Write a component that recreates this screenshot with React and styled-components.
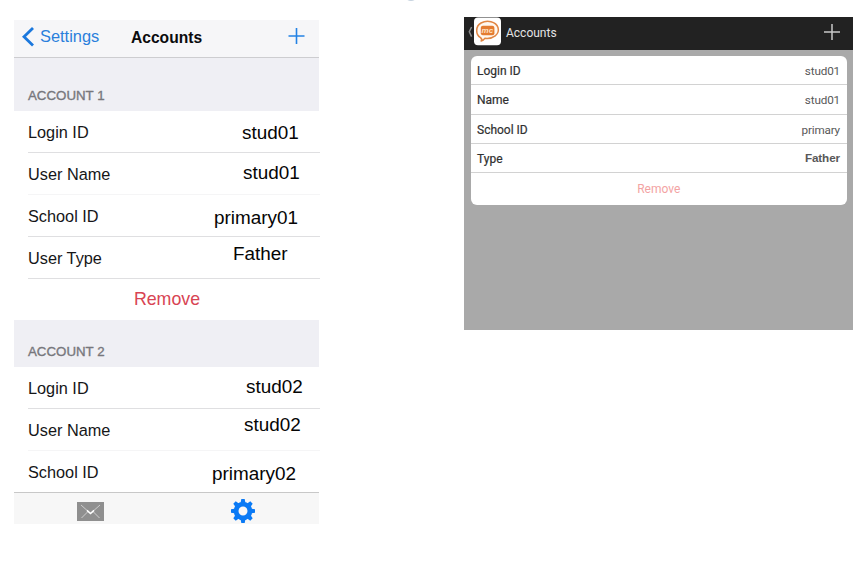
import React from "react";
import styled, { createGlobalStyle } from "styled-components";

const GlobalStyle = createGlobalStyle`
  * { box-sizing: border-box; }
  html, body { margin: 0; padding: 0; background: #fff; }
  body { overflow: hidden; }
`;

const Page = styled.main`
  position: relative;
  display: flex;
  align-items: flex-start;
  gap: 144px;
  width: 858px;
  height: 566px;
  padding: 17px 5px 0 14px;
  font-family: "Liberation Sans", Arial, sans-serif;
`;

const TopMark = styled.span`
  position: absolute;
  top: -5px;
  left: 406px;
  width: 10px;
  height: 6px;
  border-radius: 50%;
  background: #c6d3df;
`;

/* ---------- iOS screen ---------- */

const Phone = styled.section`
  display: flex;
  flex-direction: column;
  width: 306px;
  height: 504px;
  margin-top: 3px;
`;

const NavBar = styled.header`
  display: flex;
  flex: none;
  height: 38px;
  margin-right: 1px;
  padding: 0 14px 0 8px;
  line-height: 33px;
  background: #f6f6f8;
  border-bottom: 1px solid #cdcdd0;
`;

const Back = styled.div`
  display: flex;
  gap: 5px;
  width: 109px;
  color: #2a7fdc;
  font-size: 16.4px;
  svg { margin-top: 7px; }
`;

const NavTitle = styled.h1`
  flex: 1;
  margin: 0;
  color: #0b0b0d;
  font-size: 15.6px;
  line-height: 35px;
  font-weight: 700;
`;

const AddIcon = styled.svg`
  margin-top: 8px;
`;

const GroupHeader = styled.h2`
  flex: none;
  height: ${(p) => p.$height}px;
  margin: 0 1px 0 0;
  padding: ${(p) => p.$height - 23}px 0 0 14px;
  background: #efeff4;
  color: #77777c;
  font-size: 13.3px;
  line-height: 16px;
  font-weight: 400;
  -webkit-text-stroke: 0.35px #77777c;
`;

const Row = styled.div`
  display: flex;
  flex: none;
  align-items: flex-start;
  height: ${(p) => (p.$last ? 41 : 42)}px;
  margin-left: 14px;
  border-bottom: ${(p) => (p.$last ? 0 : 1)}px solid ${(p) => (p.$faint ? "#f5f5f6" : "#dfdfe1")};
`;

const Label = styled.span`
  flex: none;
  width: ${(p) => p.$width}px;
  color: #161618;
  font-size: 16.3px;
  line-height: 42px;
  white-space: nowrap;
`;

const Value = styled.span`
  margin-top: ${(p) => p.$shift}px;
  color: #050505;
  font-size: 18.9px;
  line-height: 44px;
  white-space: nowrap;
`;

const RemoveRow = styled.div`
  flex: none;
  height: 41px;
  color: #d84453;
  font-size: 17.8px;
  line-height: 40px;
  text-align: center;
`;

const TabBar = styled.nav`
  display: flex;
  flex: none;
  height: 32px;
  margin-right: 1px;
  padding: 0 0 0 63px;
  background: #f7f7f7;
  border-top: 1px solid #c8c8c8;
`;

const MailIcon = styled.svg`
  margin: 9px 126px 0 0;
`;

const GearIcon = styled.svg`
  margin-top: 5px;
`;

/* ---------- Android screen ---------- */

const Tablet = styled.section`
  width: 389px;
  height: 313px;
  background: #a9a9a9;
  font-family: Roboto, "Liberation Sans", sans-serif;
`;

const ActionBar = styled.header`
  display: flex;
  align-items: flex-start;
  height: 33px;
  padding: 0 13px 0 2px;
  background: #222;
`;

const ActionTitle = styled.h1`
  flex: 1;
  margin: 0 0 0 5px;
  color: #e4e4e4;
  font-size: 12px;
  line-height: 32px;
  font-weight: 400;
`;

const ActionAdd = styled.svg`
  margin-top: 7px;
`;

const Card = styled.div`
  height: 149px;
  margin: 6px 6px 0 6.5px;
  overflow: hidden;
  background: #fff;
  border-radius: 6px;
`;

const CardRow = styled.div`
  display: flex;
  justify-content: space-between;
  height: 29.25px;
  padding: 0 7px 0 6.5px;
  border-bottom: 1px solid #d2d2d2;
  line-height: 31px;
`;

const CardLabel = styled.span`
  color: #303030;
  font-size: 12px;
  font-weight: 400;
  -webkit-text-stroke: 0.2px #303030;
`;

const CardValue = styled.span`
  color: #585858;
  font-family: ${(p) => (p.$strong ? '"Liberation Sans", sans-serif' : "inherit")};
  font-size: 11.7px;
  font-weight: ${(p) => (p.$strong ? 700 : 400)};
  line-height: ${(p) => (p.$strong ? 28 : 31)}px;
  letter-spacing: ${(p) => (p.$strong ? -0.1 : -0.15)}px;
`;

const CardRemove = styled.div`
  color: #f3a3a3;
  font-size: 12px;
  line-height: 33px;
  text-align: center;
`;

const accountOne = [
  { label: "Login ID", value: "stud01", x: 214, shift: 0 },
  { label: "User Name", value: "stud01", x: 215, shift: -2, faint: true },
  { label: "School ID", value: "primary01", x: 186, shift: 1 },
  { label: "User Type", value: "Father", x: 205, shift: -5 },
];

const accountTwo = [
  { label: "Login ID", value: "stud02", x: 218, shift: -2 },
  { label: "User Name", value: "stud02", x: 216, shift: -6, faint: true },
  { label: "School ID", value: "primary02", x: 184, shift: 1, last: true },
];

const cardRows = [
  { label: "Login ID", value: "stud01" },
  { label: "Name", value: "stud01" },
  { label: "School ID", value: "primary" },
  { label: "Type", value: "Father", strong: true },
];

function Rows({ items }) {
  return items.map((r) => (
    <Row key={r.label} $faint={r.faint} $last={r.last}>
      <Label $width={r.x}>{r.label}</Label>
      <Value $shift={r.shift}>{r.value}</Value>
    </Row>
  ));
}

function Gear() {
  return (
    <GearIcon width="26" height="26" viewBox="-13 -13 26 26">
      <g fill="#0a7af5">
        {[0, 45, 90, 135, 180, 225, 270, 315].map((a) => (
          <path key={a} d="M-2.6-7 L-1.7-12 H1.7 L2.6-7Z" transform={`rotate(${a})`} />
        ))}
      </g>
      <circle r="6.9" fill="none" stroke="#0a7af5" strokeWidth="4.8" />
    </GearIcon>
  );
}

function AppLogo() {
  return (
    <svg width="35" height="29" viewBox="0 0 35 29">
      <path d="M5.6 10 L3.3 14.8 L5.6 19.6" fill="none" stroke="#8c8c8c" strokeWidth="1.5" />
      <rect x="8" y="0.4" width="27" height="27.8" rx="4" fill="#fff" />
      <path
        d="M14.5 20.6 C9.5 17.6 9.2 9.3 15 6 C21 2.8 30 4.3 32 10.5 C34 17.3 27 22.3 18.8 21.3 C17.8 22.8 16.8 23.6 15.2 24 C16 22.8 15.8 21.6 14.5 20.6Z"
        fill="#fff8f0"
        stroke="#e18643"
        strokeWidth="1.5"
        strokeLinejoin="round"
      />
      <rect x="14.8" y="8.8" width="13.6" height="9.4" rx="2" fill="#e47c31" />
      <text x="21.4" y="16" textAnchor="middle" fontFamily="'Liberation Sans', sans-serif" fontSize="8" fontWeight="700" fontStyle="italic" fill="#ffe1c2">
        mc
      </text>
    </svg>
  );
}

export default function App() {
  return (
    <>
      <GlobalStyle />
      <Page>
        <TopMark />
        <Phone>
          <NavBar>
            <Back>
              <svg width="13" height="20" viewBox="0 0 13 20">
                <path d="M11 1 L2 9.8 L11 18.6" fill="none" stroke="#1b78dd" strokeWidth="2.8" />
              </svg>
              <span>Settings</span>
            </Back>
            <NavTitle>Accounts</NavTitle>
            <AddIcon width="17" height="17" viewBox="0 0 17 17">
              <path d="M8.5 0 V16 M0.5 8 H16.5" stroke="#2482e4" strokeWidth="1.6" />
            </AddIcon>
          </NavBar>
          <GroupHeader $height={53}>ACCOUNT 1</GroupHeader>
          <Rows items={accountOne} />
          <RemoveRow>Remove</RemoveRow>
          <GroupHeader $height={47}>ACCOUNT 2</GroupHeader>
          <Rows items={accountTwo} />
          <TabBar>
            <MailIcon width="27" height="19" viewBox="0 0 27 19">
              <rect width="27" height="19" fill="#8f8f8f" />
              <path d="M4 3 L13.5 11.5 L23 3 M4.5 16 L11 9.5 M22.5 16 L16 9.5" fill="none" stroke="#d4d4d4" strokeWidth="0.9" />
              <path d="M10 8.4 L13.5 11.6 L17 8.4" fill="none" stroke="#fff" strokeWidth="1.5" />
            </MailIcon>
            <Gear />
          </TabBar>
        </Phone>
        <Tablet>
          <ActionBar>
            <AppLogo />
            <ActionTitle>Accounts</ActionTitle>
            <ActionAdd width="16" height="16" viewBox="0 0 16 16">
              <path d="M8 0 V16 M0 8 H16" stroke="#c8c8c8" strokeWidth="1.5" />
            </ActionAdd>
          </ActionBar>
          <Card>
            {cardRows.map((r) => (
              <CardRow key={r.label}>
                <CardLabel>{r.label}</CardLabel>
                <CardValue $strong={r.strong}>{r.value}</CardValue>
              </CardRow>
            ))}
            <CardRemove>Remove</CardRemove>
          </Card>
        </Tablet>
      </Page>
    </>
  );
}
